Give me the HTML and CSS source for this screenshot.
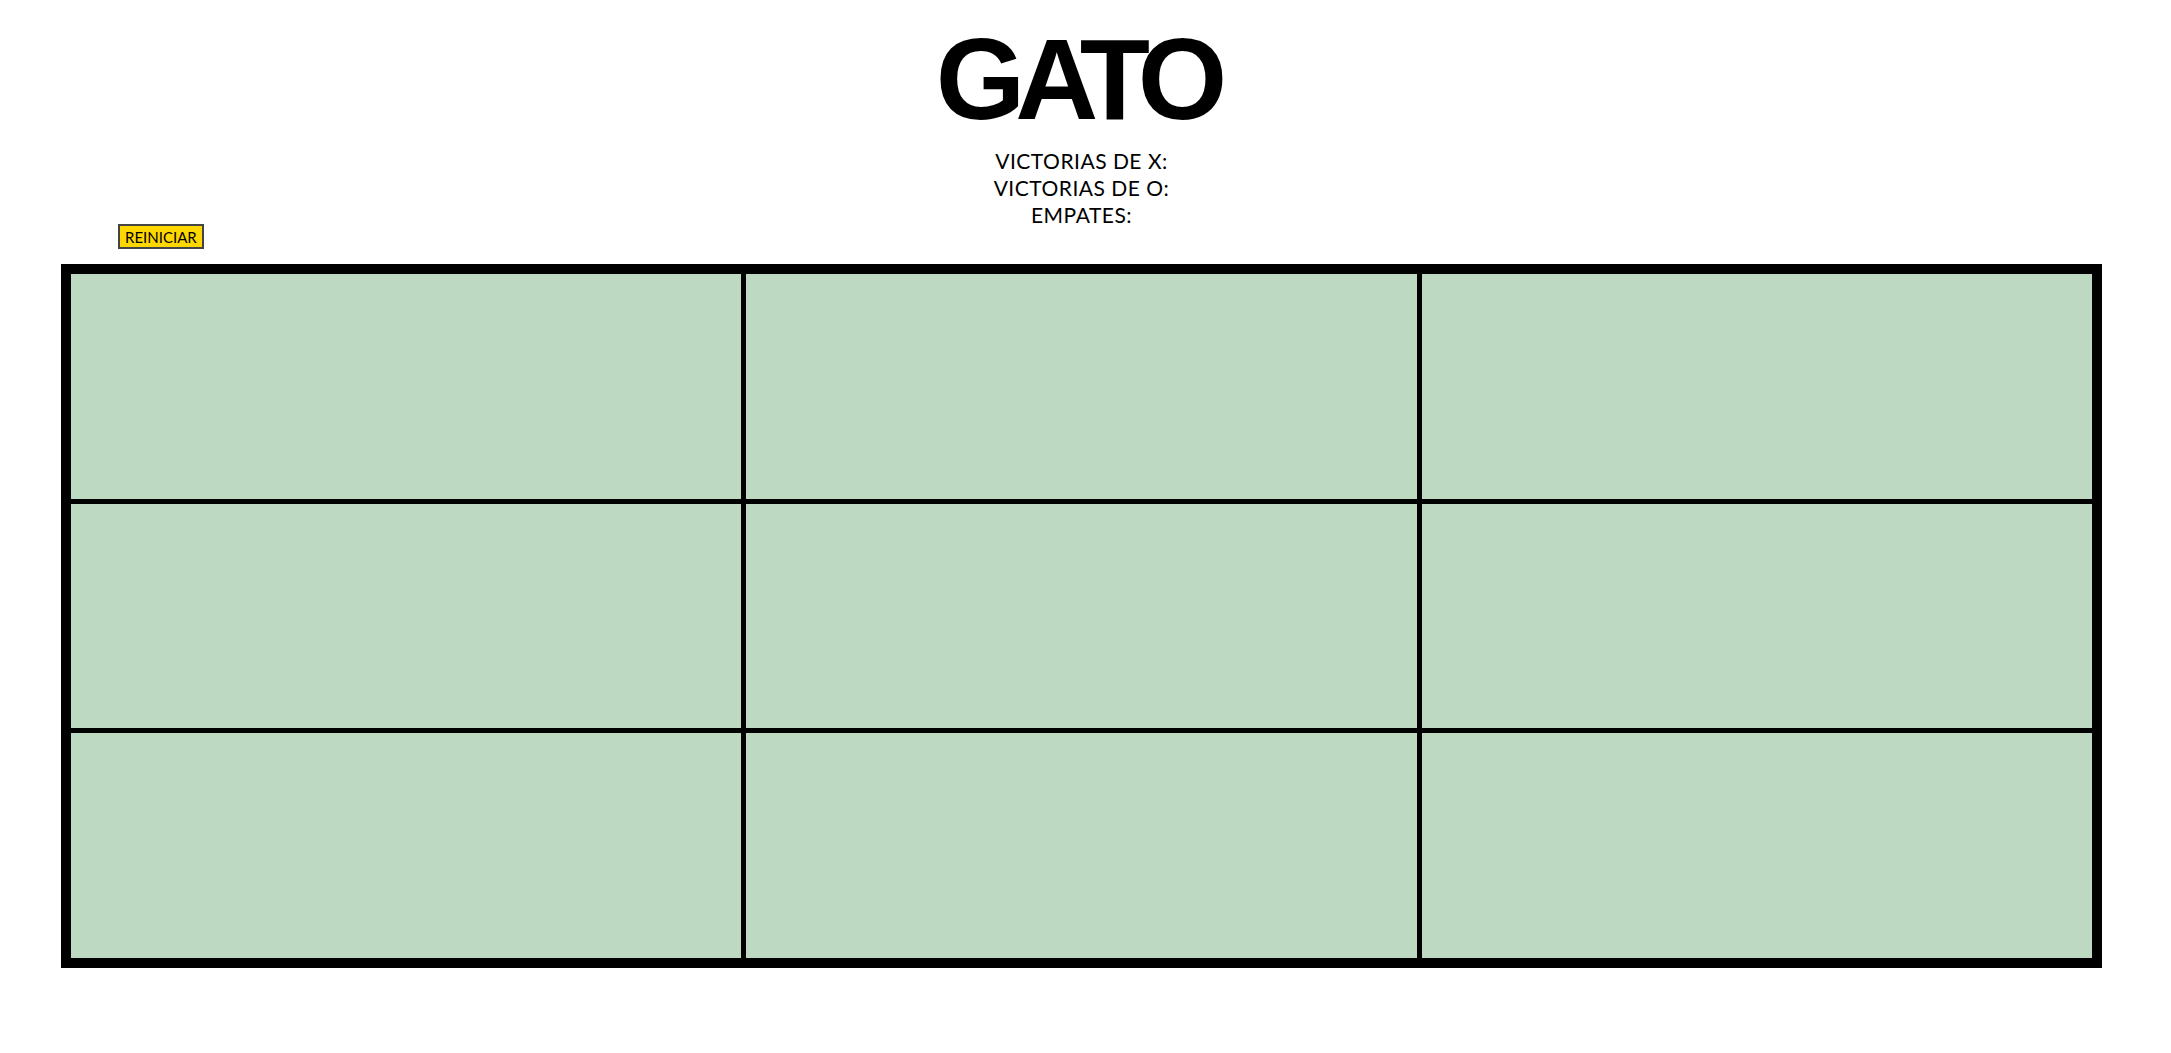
FILE: index.html
```html
<!DOCTYPE html>
<html lang="es">
<head>
  <meta charset="UTF-8" />
  <meta name="viewport" content="width=device-width, initial-scale=1.0"/>
  <title>Gato</title>
  <link rel="stylesheet" href="styles.css">
</head>
<body>

  <div class="page">
    <h1 class="title">GATO</h1>

    <div class="scores">
      <div class="score-line">VICTORIAS DE X: <span id="winsX"></span></div>
      <div class="score-line">VICTORIAS DE O: <span id="winsO"></span></div>
      <div class="score-line">EMPATES: <span id="ties"></span></div>
    </div>

    <div class="toolbar">
      <button class="reset-btn" id="reset">REINICIAR</button>
    </div>

    <div class="board">
      <div class="cell"></div>
      <div class="cell"></div>
      <div class="cell"></div>
      <div class="cell"></div>
      <div class="cell"></div>
      <div class="cell"></div>
      <div class="cell"></div>
      <div class="cell"></div>
      <div class="cell"></div>
    </div>
  </div>

</body>
</html>
```

FILE: styles.css
```css
body {
  margin: 0;
  padding: 0;
  font-family: "Lato", "Noto Sans", sans-serif;
  background-color: #fff;
  color: #000;
}

.page {
  padding: 22px 69px 0 61px;
}

.title {
  margin: 0;
  text-align: center;
  font-family: "Liberation Sans", Arial, sans-serif;
  font-size: 115px;
  font-weight: 700;
  line-height: 1;
  letter-spacing: -10px;
  text-indent: -10px;
}

.scores {
  margin-top: 10px;
  text-align: center;
  font-size: 21px;
  line-height: 27px;
  letter-spacing: 0.5px;
}

.toolbar {
  margin-top: -4px;
  padding-left: 57px;
  height: 25px;
}

.reset-btn {
  display: block;
  box-sizing: border-box;
  height: 25px;
  padding: 0 5px;
  font-family: "Lato", "Noto Sans", sans-serif;
  font-size: 15px;
  color: #000;
  background-color: #ffd700;
  border: 2px solid #444;
  border-radius: 0;
}

.board {
  margin-top: 15px;
  width: 2041px;
  height: 704px;
  box-sizing: border-box;
  border: 10px solid #000;
  background-color: #000;
  display: grid;
  grid-template-columns: repeat(3, 1fr);
  grid-template-rows: repeat(3, 1fr);
  gap: 5px;
}

.cell {
  background-color: #bdd9c1;
}
```
